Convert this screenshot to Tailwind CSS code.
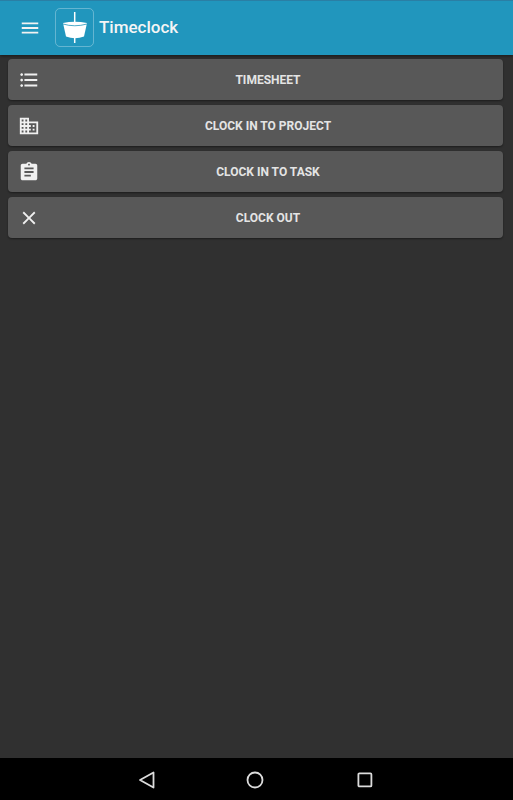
<!DOCTYPE html>
<html lang="en">
<head>
    <meta charset="UTF-8">
    <meta name="viewport" content="width=device-width, initial-scale=1.0">
    <title>Timeclock</title>
    <script src="https://cdn.jsdelivr.net/npm/@tailwindcss/browser@4"></script>
</head>
<body class="h-[800px] w-[513px] overflow-hidden bg-[#303030] font-['Roboto',sans-serif]">
    <div class="flex h-full flex-col">
        <!-- Header -->
        <header class="flex h-[55px] shrink-0 items-center border-t border-t-[#2a7fa5] bg-[#2196bd] pb-[1px] pl-[19px] shadow-[0_1px_3px_rgba(0,0,0,0.5)]">
            <svg class="h-[22px] w-[22px]" viewBox="0 0 24 24" fill="#f2f2f2"><path d="M3 18h18v-2H3v2zm0-5h18v-2H3v2zm0-7v2h18V6H3z"/></svg>
            <div class="ml-[14px] flex h-[39px] w-[39px] items-center justify-center rounded-[5px] border border-white/30">
                <svg class="h-[37px] w-[37px]" viewBox="0 0 37 37">
                    <path d="M7 14 Q18.5 11.5 31 14 L28 27.5 Q19 31 10 27.5 Z" fill="#fff"/>
                    <path d="M7 15 Q18.5 18.5 31 15" fill="none" stroke="#2196bd" stroke-width="0.8"/>
                    <path d="M18.7 3V15.5" stroke="#fff" stroke-width="1.5"/>
                    <path d="M18.7 29V34" stroke="#fff" stroke-width="1.5"/>
                </svg>
            </div>
            <span class="ml-[5px] text-[17px] font-medium text-[#f5f5f5]">Timeclock</span>
        </header>

        <!-- Menu buttons -->
        <main class="flex flex-1 flex-col gap-[5px] pl-2 pr-[10px] pt-1">
            <button class="flex h-[41px] items-center rounded bg-[#585858] pl-[10px] pr-[7px] text-xs font-bold text-[#e4e4e4] shadow-[0_1px_2px_rgba(0,0,0,0.4)]">
                <svg class="h-[22px] w-[22px] shrink-0" viewBox="0 0 24 24" fill="#f0f0f0"><path d="M4 10.5c-.83 0-1.5.67-1.5 1.5s.67 1.5 1.5 1.5 1.5-.67 1.5-1.5-.67-1.5-1.5-1.5zm0-6c-.83 0-1.5.67-1.5 1.5S3.17 7.5 4 7.5 5.5 6.83 5.5 6 4.83 4.5 4 4.5zm0 12c-.83 0-1.5.68-1.5 1.5s.68 1.5 1.5 1.5 1.5-.68 1.5-1.5-.67-1.5-1.5-1.5zM7 19h14v-2H7v2zm0-6h14v-2H7v2zm0-8v2h14V5H7z"/></svg>
                <span class="flex-1 text-center">TIMESHEET</span>
            </button>
            <button class="flex h-[41px] items-center rounded bg-[#585858] pl-[10px] pr-[7px] text-xs font-bold text-[#e4e4e4] shadow-[0_1px_2px_rgba(0,0,0,0.4)]">
                <svg class="h-[22px] w-[22px] shrink-0" viewBox="0 0 24 24" fill="#f0f0f0"><path d="M12 7V3H2v18h20V7H12zM6 19H4v-2h2v2zm0-4H4v-2h2v2zm0-4H4V9h2v2zm0-4H4V5h2v2zm4 12H8v-2h2v2zm0-4H8v-2h2v2zm0-4H8V9h2v2zm0-4H8V5h2v2zm10 12h-8v-2h2v-2h-2v-2h2v-2h-2V9h8v10zm-2-8h-2v2h2v-2zm0 4h-2v2h2v-2z"/></svg>
                <span class="flex-1 text-center">CLOCK IN TO PROJECT</span>
            </button>
            <button class="flex h-[41px] items-center rounded bg-[#585858] pl-[10px] pr-[7px] text-xs font-bold text-[#e4e4e4] shadow-[0_1px_2px_rgba(0,0,0,0.4)]">
                <svg class="h-[22px] w-[22px] shrink-0" viewBox="0 0 24 24" fill="#f0f0f0"><path d="M19 3h-4.18C14.4 1.84 13.3 1 12 1c-1.3 0-2.4.84-2.82 2H5c-1.1 0-2 .9-2 2v14c0 1.1.9 2 2 2h14c1.1 0 2-.9 2-2V5c0-1.1-.9-2-2-2zm-7 0c.55 0 1 .45 1 1s-.45 1-1 1-1-.45-1-1 .45-1 1-1zm2 14H7v-2h7v2zm3-4H7v-2h10v2zm0-4H7V7h10v2z"/></svg>
                <span class="flex-1 text-center">CLOCK IN TO TASK</span>
            </button>
            <button class="flex h-[41px] items-center rounded bg-[#585858] pl-[10px] pr-[7px] text-xs font-bold text-[#e4e4e4] shadow-[0_1px_2px_rgba(0,0,0,0.4)]">
                <svg class="h-[22px] w-[22px] shrink-0" viewBox="0 0 24 24" fill="#f0f0f0"><path d="M19 6.41 17.59 5 12 10.59 6.41 5 5 6.41 10.59 12 5 17.59 6.41 19 12 13.41 17.59 19 19 17.59 13.41 12z"/></svg>
                <span class="flex-1 text-center">CLOCK OUT</span>
            </button>
        </main>

        <!-- Android nav bar -->
        <nav class="flex h-[42px] shrink-0 items-center bg-black pl-[138px] pt-[1px]">
            <svg class="h-[18px] w-[18px]" viewBox="0 0 18 18" fill="none" stroke="#dcdcdc" stroke-width="1.8" stroke-linejoin="round"><path d="M15.5 1.5V16.5L2 9Z"/></svg>
            <svg class="ml-[90px] h-[18px] w-[18px]" viewBox="0 0 18 18" fill="none" stroke="#dcdcdc" stroke-width="1.8"><circle cx="9" cy="9" r="7.5"/></svg>
            <svg class="ml-[93px] h-[16px] w-[16px]" viewBox="0 0 16 16" fill="none" stroke="#dcdcdc" stroke-width="1.8"><rect x="1.4" y="1.4" width="13" height="13" rx="1"/></svg>
        </nav>
    </div>
</body>
</html>
